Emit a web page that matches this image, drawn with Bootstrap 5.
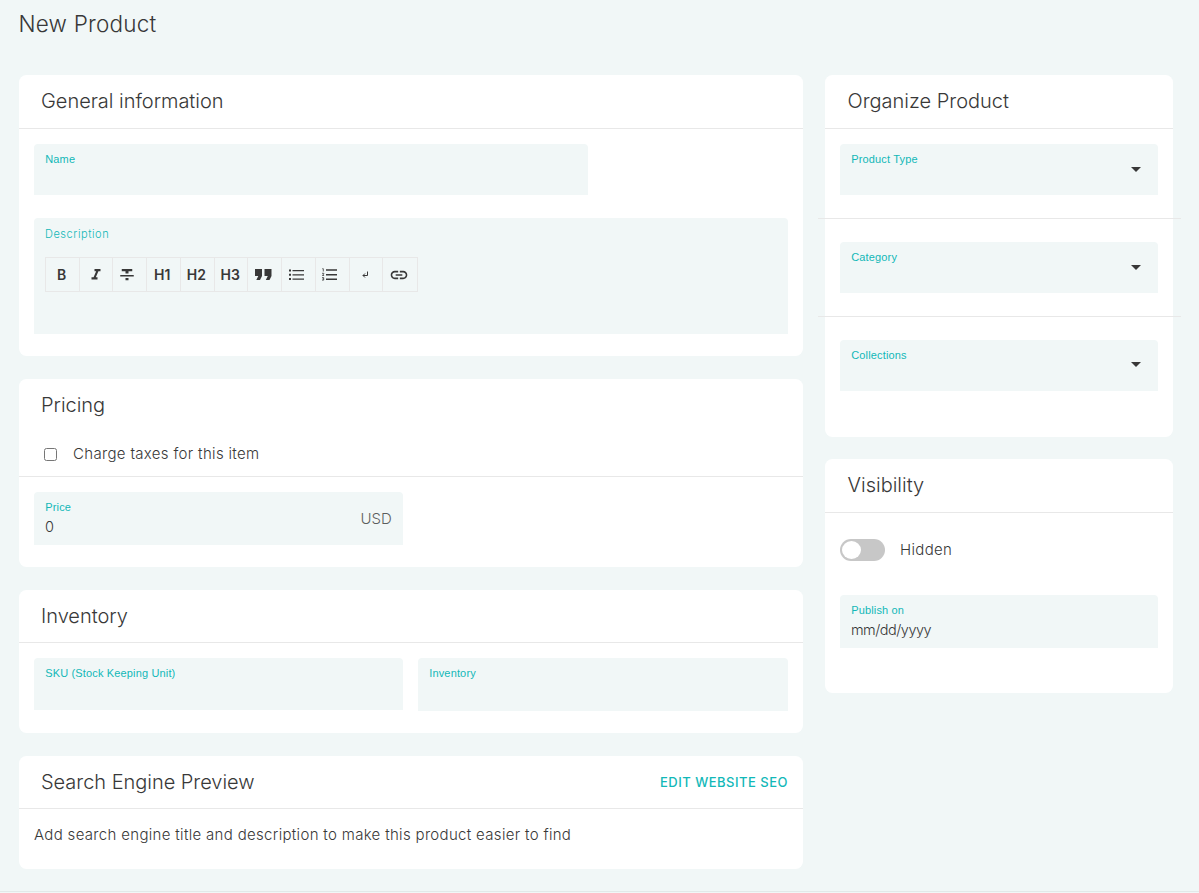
<!DOCTYPE html>
<html lang="en">
<head>
<meta charset="utf-8">
<title>New Product</title>
<meta name="viewport" content="width=device-width, initial-scale=1">
<link href="https://cdn.jsdelivr.net/npm/bootstrap@5.3.0/dist/css/bootstrap.min.css" rel="stylesheet">
<style>
:root{--surface:#f1f7f7;--teal:#12b8b8;--ink:#383838;--rule:#e8e8e8}
body{background:var(--surface);color:var(--ink);font-family:Inter,sans-serif;font-size:15px;font-weight:300;height:893px;overflow:hidden}
.page{height:892px;padding:0 26px 0 19px;border-bottom:1px solid #e2e9e9}
.columns{width:1154px}
h1{font-size:22.5px;font-weight:300;line-height:30px;padding-top:9px;height:75px;margin:0 0 0 -.5px;letter-spacing:.2px}
h2{font-size:20px;font-weight:300;line-height:24px;margin:0;letter-spacing:0}
.main-col{width:784px}
.main-col h2{margin-left:-.5px;letter-spacing:-.03px}
.side-col{width:348px}
.panel{border:0;border-radius:7.5px;--bs-card-color:var(--ink);--bs-card-bg:#fff}
.panel-head{padding:14px 15px 0 22.5px;height:54px;border-bottom:1px solid var(--rule)}
.panel-body{padding:15px}
.field{background:var(--surface);border-radius:4px 4px 0 0;height:51px;padding:8px 11.25px 0;line-height:15px}
.field label{display:block;color:var(--teal);font:400 11px/15px "Liberation Sans",sans-serif;letter-spacing:.15px}
.field .value{font-size:14.5px;line-height:18px;margin:3px 0 0 -.3px;letter-spacing:-.5px}
.field label.editor-label{font-family:Inter,sans-serif;font-weight:300;letter-spacing:.55px;margin-left:-.3px;line-height:16px}
.tool-row{width:373px;height:35px;border:1px solid var(--rule);margin-top:15px}
.tool-row button{flex:0 0 33.75px;width:33.75px;border:0;border-right:1px solid var(--rule);background:none;color:var(--ink);padding:0 1.5px 0 0;font:600 14px/20px Inter,sans-serif;display:flex;align-items:center;justify-content:center}
.tool-row button:first-child{flex-basis:33.25px}
.tool-row button:nth-child(2){padding-right:0}
.tool-row button:nth-child(4){padding-right:2.5px}
.tool-row button:last-child{border-right:0}
.tool-row .nudge{margin-left:-3px}
.caret{width:0;height:0;border:5px solid transparent;border-top-color:var(--ink);border-bottom:0;margin:15px 6px 0 0}
.caret.raised{margin-top:14px}
.sep{height:1px;background:var(--rule);margin:23px -23px 23px -22px}
.check{width:13px;height:13px;margin:0;border:1px solid #767676;border-radius:2.5px}
.spaced{letter-spacing:.33px}
.toggle{width:45px;height:22px;border-radius:11px;background:#c7c7c7;padding:2px}
.toggle i{display:block;width:19px;height:18px;border-radius:50%;background:#fff}
.seo{color:var(--teal);font-size:13px;font-weight:500;letter-spacing:.5px;line-height:24px;text-decoration:none}
</style>
</head>
<body>
<main class="page">
<h1>New Product</h1>
<div class="columns d-flex align-items-start justify-content-between">
  <div class="main-col d-flex flex-column">
    <section class="card panel" style="height:281px;margin-bottom:23px">
      <div class="panel-head"><h2>General information</h2></div>
      <div class="panel-body">
        <div class="field" style="width:554px"><label>Name</label></div>
        <div class="field" style="height:116px;margin-top:23px">
          <label class="editor-label">Description</label>
          <div class="tool-row d-flex">
            <button>B</button>
            <button><svg width="18" height="18" viewBox="0 0 24 24" fill="currentColor"><path d="M10 4v3h2.21l-3.42 8H6v3h8v-3h-2.21l3.42-8H18V4z"/></svg></button>
            <button><svg class="nudge" width="18" height="18" viewBox="0 0 24 24" fill="currentColor"><path d="M10 19h4v-3h-4v3zM5 4v3h5v3h4V7h5V4H5zM3 14h18v-2H3v2z"/></svg></button>
            <button>H1</button>
            <button>H2</button>
            <button>H3</button>
            <button><svg width="17" height="11" viewBox="0 0 17 11" fill="currentColor"><path d="M0 0h7v7L5 11H1.3l2-4H0zM9.500 0h7v7l-2 4h-3.700l2-4H9.500z"/></svg></button>
            <button><svg class="nudge" width="15" height="12" viewBox="0 0 15 12" fill="currentColor"><path d="M0 .5h2v2H0zM0 4.700h2v2H0zM0 9h2v2H0zM3.500 1H15v1.300H3.500zM3.500 5.200H15v1.300H3.500zM3.500 9.400H15v1.300H3.500z"/></svg></button>
            <button><svg class="nudge" width="15" height="13" viewBox="0 0 15 13"><path d="M4 2h11M4 6.700h11M4 11.300h11" stroke="currentColor" stroke-width="1.500"/><path d="M.3 .7h1v2.800M0 5.300h1.800v.6L.4 7.500h1.700M0 9.600h1.700v2.500H0M.5 10.900h1.200" stroke="currentColor" stroke-width=".8" fill="none"/></svg></button>
            <button><svg width="7" height="8" viewBox="0 0 7 8" fill="none" stroke="currentColor"><path d="M5.500 .5v4H1M3 2.500l-2 2 2 2"/></svg></button>
            <button><svg width="20" height="20" viewBox="0 0 24 24" fill="currentColor"><path d="M3.900 12c0-1.710 1.390-3.100 3.100-3.100h4V7H7c-2.760 0-5 2.240-5 5s2.240 5 5 5h4v-1.900H7c-1.710 0-3.100-1.390-3.100-3.100zM8 13h8v-2H8v2zm9-6h-4v1.900h4c1.710 0 3.100 1.390 3.100 3.100s-1.390 3.100-3.100 3.100h-4V17h4c2.760 0 5-2.240 5-5s-2.240-5-5-5z"/></svg></button>
          </div>
        </div>
      </div>
    </section>
    <section class="card panel" style="height:188px;margin-bottom:23px">
      <div class="panel-head" style="height:98px"><h2>Pricing</h2>
        <div class="d-flex align-items-center spaced" style="margin:25px 0 0 2.5px;height:24px"><input type="checkbox" class="check"><span style="margin-left:16px">Charge taxes for this item</span></div>
      </div>
      <div class="panel-body">
        <div class="field d-flex justify-content-between" style="width:369px;height:53px"><div><label>Price</label><div class="value">0</div></div><span style="opacity:.8;margin-top:11px">USD</span></div>
      </div>
    </section>
    <section class="card panel" style="height:143px;margin-bottom:23px">
      <div class="panel-head" style="height:53px"><h2>Inventory</h2></div>
      <div class="panel-body d-flex align-items-start" style="gap:15px">
        <div class="field" style="width:369px;height:52px"><label>SKU (Stock Keeping Unit)</label></div>
        <div class="field" style="width:370px;height:53px"><label>Inventory</label></div>
      </div>
    </section>
    <section class="card panel" style="height:113px">
      <div class="panel-head d-flex justify-content-between" style="height:53px"><h2>Search Engine Preview</h2><a class="seo" href="#">EDIT WEBSITE SEO</a></div>
      <div class="panel-body spaced" style="letter-spacing:.32px">Add search engine title and description to make this product easier to find</div>
    </section>
  </div>
  <aside class="side-col d-flex flex-column">
    <section class="card panel" style="height:362px;margin-bottom:22px">
      <div class="panel-head"><h2>Organize Product</h2></div>
      <div class="panel-body">
        <div class="field d-flex justify-content-between"><label>Product Type</label><i class="caret"></i></div>
        <div class="sep"></div>
        <div class="field d-flex justify-content-between"><label>Category</label><i class="caret"></i></div>
        <div class="sep"></div>
        <div class="field d-flex justify-content-between"><label>Collections</label><i class="caret raised"></i></div>
      </div>
    </section>
    <section class="card panel" style="height:234px">
      <div class="panel-head"><h2>Visibility</h2></div>
      <div class="panel-body" style="padding-top:26px">
        <div class="d-flex align-items-center spaced" style="height:22px;gap:15px;margin-bottom:34px"><span class="toggle"><i></i></span><span>Hidden</span></div>
        <div class="field" style="height:53px"><label>Publish on</label><div class="value">mm/dd/yyyy</div></div>
      </div>
    </section>
  </aside>
</div>
</main>
<script src="https://cdn.jsdelivr.net/npm/bootstrap@5.3.0/dist/js/bootstrap.bundle.min.js"></script>
</body>
</html>
